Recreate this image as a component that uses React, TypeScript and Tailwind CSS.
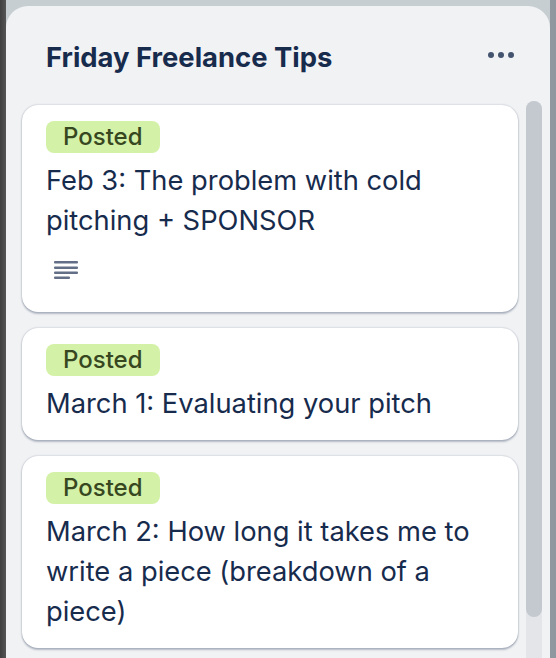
import React from 'react';

const cards = [
  { title: 'Feb 3: The problem with cold pitching + SPONSOR', description: true },
  { title: 'March 1: Evaluating your pitch', description: false },
  { title: 'March 2: How long it takes me to write a piece (breakdown of a piece)', description: false },
];

const DescriptionIcon = () => (
  <svg width="24" height="20" viewBox="0 0 24 20" className="text-[#626f86]">
    <rect x="0" y="2" width="24" height="2.5" rx="1" fill="currentColor" />
    <rect x="0" y="7.5" width="24" height="2.5" rx="1" fill="currentColor" />
    <rect x="0" y="12.5" width="24" height="2.5" rx="1" fill="currentColor" />
    <rect x="0" y="17.5" width="16" height="2.5" rx="1" fill="currentColor" />
  </svg>
);

export default function App() {
  return (
    <div
      className="h-[658px] w-[556px] overflow-hidden px-[6px] pt-[6px] bg-[linear-gradient(90deg,#3f3f3f_0px,#555555_6px,#c7ced2_6px,#c7ced2_550px,#8f989e_550px)]"
      style={{ fontFamily: 'Inter, "Noto Sans", sans-serif' }}
    >
      <div className="flex h-full flex-col rounded-t-[22px] bg-[#f1f2f4]">
        {/* Header */}
        <div className="flex items-center justify-between pl-[40px] pr-[36px] pt-[31px]">
          <h2 className="text-[27.4px] font-bold leading-[40px] text-[#172b4d]">Friday Freelance Tips</h2>
          <div className="flex items-center gap-[4px] pb-[4px]">
            <span className="h-[6px] w-[6px] rounded-full bg-[#44546f]" />
            <span className="h-[6px] w-[6px] rounded-full bg-[#44546f]" />
            <span className="h-[6px] w-[6px] rounded-full bg-[#44546f]" />
          </div>
        </div>

        {/* Cards + scrollbar */}
        <div className="mt-[24px] flex flex-1 gap-[8px] pl-[16px] pr-[8px]">
          <div className="flex w-[496px] flex-col gap-[16px] pt-[4px]">
            {cards.map((card, i) => (
              <div
                key={i}
                className="rounded-[16px] bg-white px-[24px] pt-[16px] pb-[16px] shadow-[0_2px_2px_rgba(9,30,66,0.25),0_0_2px_rgba(9,30,66,0.31)]"
              >
                <span className="inline-flex h-[32px] items-center rounded-[8px] bg-[#d3f1a7] px-[17px] text-[24px] font-medium text-[#37471f]">
                  Posted
                </span>
                <p className="mt-[8px] text-[27.3px] leading-[40px] text-[#172b4d]">{card.title}</p>
                {card.description && (
                  <div className="flex h-[55px] items-center pl-[8px]">
                    <DescriptionIcon />
                  </div>
                )}
              </div>
            ))}
          </div>
          <div className="w-[16px] self-stretch rounded-t-full bg-[#e3e5e9]">
            <div className="h-[516px] w-full rounded-full bg-[#c4c8cf]" />
          </div>
        </div>
      </div>
    </div>
  );
}
